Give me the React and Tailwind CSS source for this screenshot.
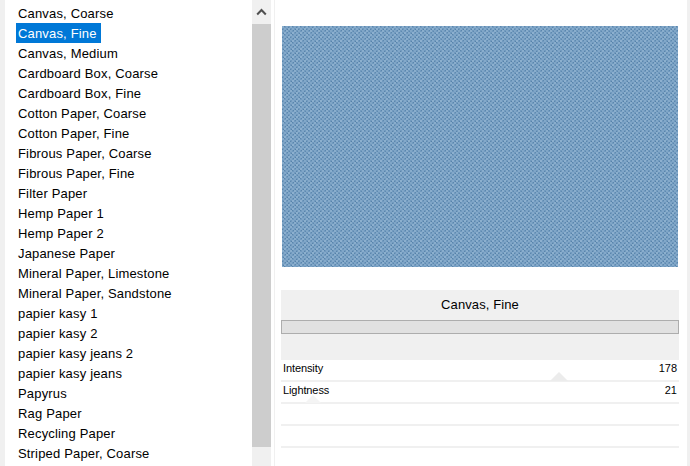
import React from "react";

const items = ["Canvas, Coarse","Canvas, Fine","Canvas, Medium","Cardboard Box, Coarse","Cardboard Box, Fine","Cotton Paper, Coarse","Cotton Paper, Fine","Fibrous Paper, Coarse","Fibrous Paper, Fine","Filter Paper","Hemp Paper 1","Hemp Paper 2","Japanese Paper","Mineral Paper, Limestone","Mineral Paper, Sandstone","papier kasy 1","papier kasy 2","papier kasy jeans 2","papier kasy jeans","Papyrus","Rag Paper","Recycling Paper","Striped Paper, Coarse"];

function Texture() {
  return (
    <svg className="block w-full h-full" aria-hidden="true">
      <defs>
        <pattern id="weave" width="8" height="8" patternUnits="userSpaceOnUse">
          <rect width="8" height="8" fill="#7099be" />
          <rect x="0" y="0" width="2" height="2" fill="#8aaecd" />
          <rect x="4" y="0" width="2" height="2" fill="#80a6c8" />
          <rect x="2" y="2" width="2" height="2" fill="#84a9ca" />
          <rect x="6" y="2" width="2" height="2" fill="#8cb0ce" />
          <rect x="0" y="4" width="2" height="2" fill="#80a6c7" />
          <rect x="4" y="4" width="2" height="2" fill="#8aaecd" />
          <rect x="2" y="6" width="2" height="2" fill="#8db0cf" />
          <rect x="6" y="6" width="2" height="2" fill="#82a8c9" />
          <rect x="2" y="0" width="1" height="1" fill="#5a86ad" />
          <rect x="6" y="1" width="1" height="1" fill="#5a84aa" />
          <rect x="0" y="3" width="1" height="1" fill="#5c87ad" />
          <rect x="5" y="3" width="1" height="1" fill="#5580a7" />
          <rect x="3" y="4" width="1" height="1" fill="#5a86ad" />
          <rect x="7" y="5" width="1" height="1" fill="#5e8ab0" />
          <rect x="1" y="7" width="1" height="1" fill="#5783aa" />
          <rect x="5" y="6" width="1" height="1" fill="#5e8aaf" />
        </pattern>
      </defs>
      <rect width="100%" height="100%" fill="url(#weave)" />
    </svg>
  );
}

function Row({ label, value }) {
  return (
    <div className="flex justify-between items-start h-[22px] pl-[2px] pr-[2px] text-[11px] leading-[16px] text-black border-b-2 border-[#f0f0f0]">
      <span className="tracking-[-0.1px]">{label}</span>
      <span>{value}</span>
    </div>
  );
}

export default function App() {
  return (
    <div className="relative flex w-[690px] h-[466px] overflow-hidden bg-white" style={{ fontFamily: '"Liberation Sans", Arial, sans-serif' }}>
      <div className="w-[5px] bg-[#f0f0f0]" />
      <div className="w-[247px] pl-[11px] pt-[3px] overflow-hidden">
        {items.map((t, i) => (
          <div key={t} className="h-[20px] flex items-center">
            <span className={"text-[13px] h-[20px] leading-[22px] pl-[2px] tracking-[0.17px] " + (i === 1 ? "pr-[4px] bg-[#0078d7] text-white" : "pr-[2px] text-black")}>{t}</span>
          </div>
        ))}
      </div>
      <div className="w-[19px] flex flex-col bg-[#f0f0f0]">
        <div className="h-[24px] flex items-center justify-center">
          <svg width="11" height="8" viewBox="0 0 11 8" aria-hidden="true">
            <path d="M1.2 6.5 L5.5 2 L9.8 6.5" fill="none" stroke="#505050" strokeWidth="2" />
          </svg>
        </div>
        <div className="h-[423px] bg-[#cdcdcd]" />
      </div>
      <div className="w-[3px] bg-white" />
      <div className="w-[1px] bg-[#f0f0f0]" />
      <div className="flex-1 flex flex-col pl-[6px] pr-[8px] pt-[26px]">
        <div className="ml-[1px] mr-[1px] h-[241px]"><Texture /></div>
        <div className="mt-[23px] h-[70px] bg-[#f0f0f0] flex flex-col">
          <div className="h-[30px] flex items-center justify-center text-[13px] text-black tracking-[0.1px]">Canvas, Fine</div>
          <div className="h-[14px] bg-[#e1e1e1] border border-[#adadad]" />
        </div>
        <Row label="Intensity" value="178" />
        <Row label="Lightness" value="21" />
        <Row label="" value="" />
        <Row label="" value="" />
      </div>
      <div className="w-[3px] bg-[#f0f0f0]" />
      <svg className="absolute left-[550px] top-[371px]" width="18" height="10" aria-hidden="true"><path d="M0 10 L9 1 L18 10Z" fill="#ececec" /></svg>
      <svg className="absolute left-[305px] top-[395px]" width="16" height="8" aria-hidden="true"><path d="M0 8 L8 0 L16 8Z" fill="#f4f4f4" /></svg>
    </div>
  );
}
